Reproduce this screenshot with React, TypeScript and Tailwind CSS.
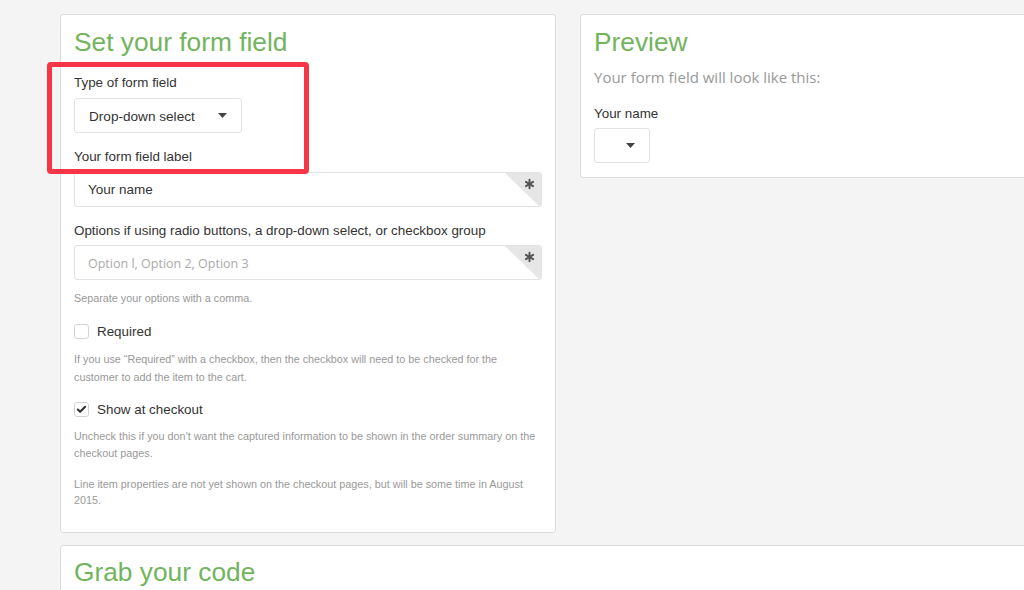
import { Check } from "lucide-react";

// ── Small pieces ────────────────────────────────────────────────────────────

const sans = "font-['Liberation_Sans',Arial,sans-serif]";
const open = "font-['Open_Sans','Noto_Sans',sans-serif]";

function Caret() {
  return (
    <svg width="9" height="5" viewBox="0 0 9 5" className="shrink-0">
      <path d="M0 0 L9 0 L4.5 5 Z" fill="#444" />
    </svg>
  );
}

function RequiredInput({ value, placeholder }: { value?: string; placeholder?: string }) {
  return (
    <div className="relative flex h-[35px] w-full items-center overflow-hidden rounded-[3px] border border-[#e3e3e3] bg-white pl-[13px]">
      {value ? (
        <span className={`${sans} pt-[2px] text-[13.5px] text-[#333]`}>{value}</span>
      ) : (
        <span className={`${open} pt-[4px] text-[12.5px] text-[#aaa]`}>{placeholder}</span>
      )}
      {/* grey corner with asterisk */}
      <svg width="36" height="35" viewBox="0 0 36 35" className="absolute right-0 top-0">
        <path d="M0 0 L36 0 L36 35 Z" fill="#e6e6e6" />
        <g transform="translate(24.5 11)" stroke="#555" strokeWidth="2" strokeLinecap="round">
          <line x1="0" y1="-4.2" x2="0" y2="4.2" />
          <line x1="-3.6" y1="-2.1" x2="3.6" y2="2.1" />
          <line x1="-3.6" y1="2.1" x2="3.6" y2="-2.1" />
        </g>
      </svg>
    </div>
  );
}

function CheckRow({ label, checked }: { label: string; checked?: boolean }) {
  return (
    <div className="flex h-[15px] items-center gap-[8px]">
      <span className="flex h-[15px] w-[15px] items-center justify-center rounded-[3px] border border-[#d4d4d4] bg-white">
        {checked && <Check className="h-[11px] w-[11px] text-[#333]" strokeWidth={4.5} />}
      </span>
      <span className={`${sans} text-[13.4px] leading-[18px] text-[#333]`}>{label}</span>
    </div>
  );
}

const heading = `${sans} text-[26.3px] leading-[30px] text-[#72b45e]`;
const label = `${sans} text-[13.4px] leading-[18px] text-[#333]`;
const help = `${sans} text-[10.8px] text-[#999]`;

// ── Page ────────────────────────────────────────────────────────────────────

export default function App() {
  return (
    <div className="relative h-[590px] w-[1024px] overflow-hidden bg-[#f4f4f4] pl-[60px] pt-[14px]">
      <div className="flex items-start gap-[24px]">
        {/* Set your form field */}
        <div className="flex w-[496px] shrink-0 flex-col rounded-[3px] border border-[#dcdcdc] bg-white px-[13px] pb-[24px] pt-[12px]">
          <h1 className={heading}>Set your form field</h1>

          <p className={`${label} mt-[17px]`}>Type of form field</p>
          <div className="mt-[6px] flex h-[35px] w-[168px] items-center justify-between rounded-[3px] border border-[#e3e3e3] bg-white pl-[14px] pr-[14px]">
            <span className={`${sans} pt-[3px] text-[13.6px] text-[#333]`}>Drop-down select</span>
            <Caret />
          </div>

          <p className={`${label} mt-[15px]`}>Your form field label</p>
          <div className="mt-[6px]">
            <RequiredInput value="Your name" />
          </div>

          <p className={`${label} mt-[15px]`}>
            Options if using radio buttons, a drop-down select, or checkbox group
          </p>
          <div className="mt-[5px]">
            <RequiredInput placeholder="Option l, Option 2, Option 3" />
          </div>

          <p className={`${help} mt-[10px] leading-[16px]`}>Separate your options with a comma.</p>

          <div className="mt-[18px]">
            <CheckRow label="Required" />
          </div>
          <p className={`${help} mt-[11px] leading-[18px]`}>
            If you use “Required” with a checkbox, then the checkbox will need to be checked for the
            <br />
            customer to add the item to the cart.
          </p>

          <div className="mt-[16px]">
            <CheckRow label="Show at checkout" checked />
          </div>
          <p className={`${help} mt-[11px] leading-[17px]`}>
            Uncheck this if you don't want the captured information to be shown in the order summary on the
            <br />
            checkout pages.
          </p>
          <p className={`${help} mt-[14px] leading-[16px]`}>
            Line item properties are not yet shown on the checkout pages, but will be some time in August
            <br />
            2015.
          </p>
        </div>

        {/* Preview */}
        <div className="flex w-[496px] shrink-0 flex-col rounded-[3px] border border-[#dcdcdc] bg-white px-[13px] pb-[14px] pt-[12px]">
          <h1 className={heading}>Preview</h1>
          <p className={`${open} mt-[10px] text-[15px] leading-[20px] text-[#999]`}>
            Your form field will look like this:
          </p>
          <p className={`${label} mt-[18px]`}>Your name</p>
          <div className="mt-[5px] flex h-[35px] w-[56px] items-center justify-end rounded-[3px] border border-[#e3e3e3] bg-white pr-[14px]">
            <Caret />
          </div>
        </div>
      </div>

      {/* Grab your code */}
      <div className="mt-[12px] w-[1000px] rounded-[3px] border border-[#dcdcdc] bg-white px-[13px] pb-[20px] pt-[11px]">
        <h1 className={heading}>Grab your code</h1>
      </div>

      {/* annotation box */}
      <div className="absolute left-[47px] top-[62px] h-[112px] w-[262px] rounded-[4px] border-[5px] border-[#f83447]" />
    </div>
  );
}
